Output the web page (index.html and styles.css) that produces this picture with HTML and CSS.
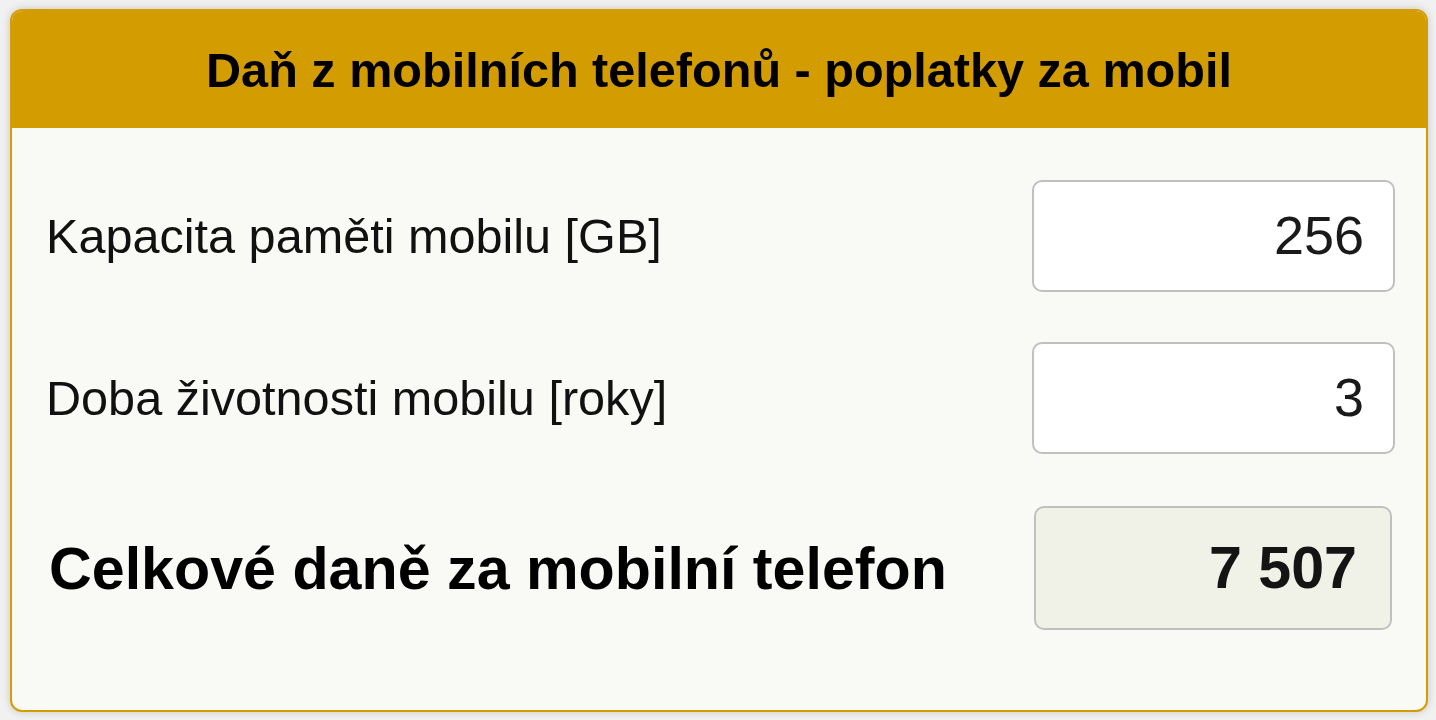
FILE: index.html
```html
<!DOCTYPE html>
<html lang="cs">
<head>
    <meta charset="UTF-8">
    <meta name="viewport" content="width=device-width, initial-scale=1.0">
    <title>Daň z mobilních telefonů</title>
    <link rel="stylesheet" href="styles.css">
</head>
<body>
    <div class="calc">
        <div class="calc-head">
            <h2>Daň z mobilních telefonů - poplatky za mobil</h2>
        </div>
        <div class="calc-body">
            <div class="row">
                <label for="gb">Kapacita paměti mobilu [GB]</label>
                <input id="gb" type="text" value="256">
            </div>
            <div class="row">
                <label for="years">Doba životnosti mobilu [roky]</label>
                <input id="years" type="text" value="3">
            </div>
            <div class="row total">
                <span class="total-label">Celkové daně za mobilní telefon</span>
                <div class="total-value">7 507</div>
            </div>
        </div>
    </div>
</body>
</html>
```

FILE: styles.css
```css
*{
    box-sizing: border-box;
    margin: 0;
    padding: 0;
}
body{
    background: #f1f1f1;
    padding: 9px 8px 8px 10px;
    font-family: "Liberation Sans", Arial, sans-serif;
    color: #111;
}
.calc{
    border: 2px solid #d49d00;
    border-radius: 12px;
    overflow: hidden;
    background: #f9faf6;
    box-shadow: 0 0 8px rgba(0, 0, 0, .18);
    height: 703px;
}
.calc-head{
    background: #d39c00;
    height: 117px;
    display: flex;
    align-items: center;
    justify-content: center;
}
.calc-head h2{
    font-size: 48.6px;
    font-weight: bold;
    color: #000;
}
.calc-body{
    padding: 52px 31px 0 34px;
    display: flex;
    flex-direction: column;
    gap: 50px;
}
.row{
    display: flex;
    align-items: center;
    justify-content: space-between;
}
.row label{
    font-size: 48.6px;
    color: #111;
}
.row input{
    width: 363px;
    height: 112px;
    border: 2px solid #c0c0c0;
    border-radius: 10px;
    background: #fff;
    font-family: "Liberation Sans", Arial, sans-serif;
    font-size: 54px;
    color: #1a1a1a;
    text-align: right;
    padding: 0 29px 2px 20px;
    outline: none;
}
.row.total{
    margin-top: 2px;
}
.total-label{
    font-size: 59.2px;
    font-weight: bold;
    color: #000;
    padding-left: 3px;
}
.total-value{
    width: 358px;
    height: 124px;
    margin-right: 3px;
    border: 2px solid #c0c0c0;
    border-radius: 10px;
    background: #f1f2e7;
    font-size: 59.2px;
    font-weight: bold;
    color: #141414;
    display: flex;
    align-items: center;
    justify-content: flex-end;
    padding: 0 33px 2px 0;
}
```
